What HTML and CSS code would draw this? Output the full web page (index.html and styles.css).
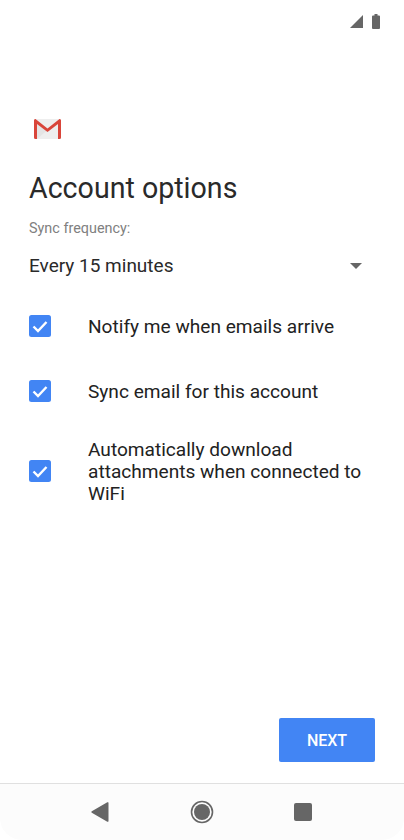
FILE: index.html
```html
<!DOCTYPE html>
<html lang="en">
<head>
<meta charset="utf-8">
<title>Account options</title>
<link rel="stylesheet" href="styles.css">
</head>
<body>
<div class="screen">
  <div class="status">
    <svg class="sig" width="13" height="13" viewBox="0 0 13 13"><path class="ic" d="M0 13 13 0v13z"/></svg>
    <svg class="bat" width="8" height="15" viewBox="0 0 8 15"><path class="ic" d="M2.500 0h3v1.500h1.500a1 1 0 0 1 1 1V14a1 1 0 0 1-1 1H1a1 1 0 0 1-1-1V2.500a1 1 0 0 1 1-1h1.500z"/></svg>
  </div>
  <main class="content">
    <svg class="logo" width="27" height="20" viewBox="0 0 27 20">
      <rect x="0" y="0" width="27" height="20" rx="1.500" fill="#eeeeee"/>
      <path d="M3 20 13.500 11 3 3z" fill="#e4e4e4"/>
      <path d="M0 1.500C0 .5 .8 0 1.500 0L13.500 9.500 25.500 0C26.200 0 27 .5 27 1.500V18.500A1.500 1.500 0 0 1 25.500 20H24V5L13.500 13 3 5V20H1.500A1.500 1.500 0 0 1 0 18.500z" fill="#d9453a"/>
    </svg>
    <h1 class="title">Account options</h1>
    <div class="label">Sync frequency:</div>
    <div class="select">
      <span>Every 15 minutes</span>
      <svg width="12" height="6" viewBox="0 0 12 6"><path class="ic" d="M0 0h12L6 6z"/></svg>
    </div>
    <div class="opt one">
      <span class="box"><svg width="16" height="13" viewBox="0 0 16 13"><path class="tick" d="M1.500 6.500 6 11 14.500 2"/></svg></span>
      <span class="opt-text">Notify me when emails arrive</span>
    </div>
    <div class="opt two">
      <span class="box"><svg width="16" height="13" viewBox="0 0 16 13"><path class="tick" d="M1.500 6.500 6 11 14.500 2"/></svg></span>
      <span class="opt-text">Sync email for this account</span>
    </div>
    <div class="opt three">
      <span class="box"><svg width="16" height="13" viewBox="0 0 16 13"><path class="tick" d="M1.500 6.500 6 11 14.500 2"/></svg></span>
      <span class="opt-text">Automatically download attachments when connected to WiFi</span>
    </div>
  </main>
  <div class="actions"><button class="next">NEXT</button></div>
  <nav class="nav">
    <svg width="18" height="20" viewBox="0 0 18 20"><path class="ic" d="M17.500 1V19a.8.8 0 0 1-1.200.7L.8 10.700a.8.8 0 0 1 0-1.400L16.300.3a.8.8 0 0 1 1.200.7z"/></svg>
    <svg width="24" height="24" viewBox="0 0 24 24"><circle cx="12" cy="12" r="10.500" fill="none" stroke="#666" stroke-width="1.600"/><circle class="ic" cx="12" cy="12" r="8"/></svg>
    <svg width="18" height="18" viewBox="0 0 18 18"><rect class="ic" width="18" height="18" rx="2"/></svg>
  </nav>
</div>
</body>
</html>
```
FILE: styles.css
```css
* { box-sizing: border-box; }
html, body { margin: 0; padding: 0; background: #fff; }
.screen {
  width: 404px; height: 840px; display: flex; flex-direction: column;
  font-family: Roboto, sans-serif; color: #2a2a2a; overflow: hidden;
}
.ic { fill: #666; }
.status {
  height: 119px; padding: 14px 24px 0 0; display: flex; justify-content: flex-end;
  align-items: flex-start; gap: 9px;
}
.sig { margin-top: 1px; }
.content { flex: 1; padding: 0 29px; display: flex; flex-direction: column; }
.logo { margin-left: 5px; display: block; }
.title { margin: 32px 0 0; font-size: 28.600px; font-weight: 400; line-height: 34px; }
.label { margin-top: 15px; font-size: 14.400px; line-height: 18px; color: #808080; }
.select {
  margin-top: 16px; font-size: 19px; line-height: 24px; display: flex;
  justify-content: space-between; align-items: center; padding-right: 13px;
}
.opt { display: flex; align-items: center; gap: 37px; font-size: 19.100px; line-height: 22px; color: #222; }
.opt-text { padding-top: 2px; }
.one { margin-top: 36px; }
.two { margin-top: 41px; }
.three { margin-top: 34px; padding-right: 2px; }
.box {
  flex: none; width: 22px; height: 22px; border-radius: 2.500px; background: #4285f4;
  display: flex; align-items: center; justify-content: center;
}
.tick { fill: none; stroke: #fff; stroke-width: 2.400; }
.actions { display: flex; justify-content: flex-end; padding: 0 29px 21px 0; }
.next {
  width: 96px; height: 44px; border: 0; border-radius: 2px; background: #4285f4; color: #fff;
  font: 500 16px Roboto, sans-serif; padding: 0;
}
.nav {
  height: 57px; border-top: 1px solid #e0e0e0; background: #fcfcfc;
  border-radius: 0 0 22px 22px;
  display: flex; align-items: center; padding: 0 92px 1px 91px; justify-content: space-between;
}
```
